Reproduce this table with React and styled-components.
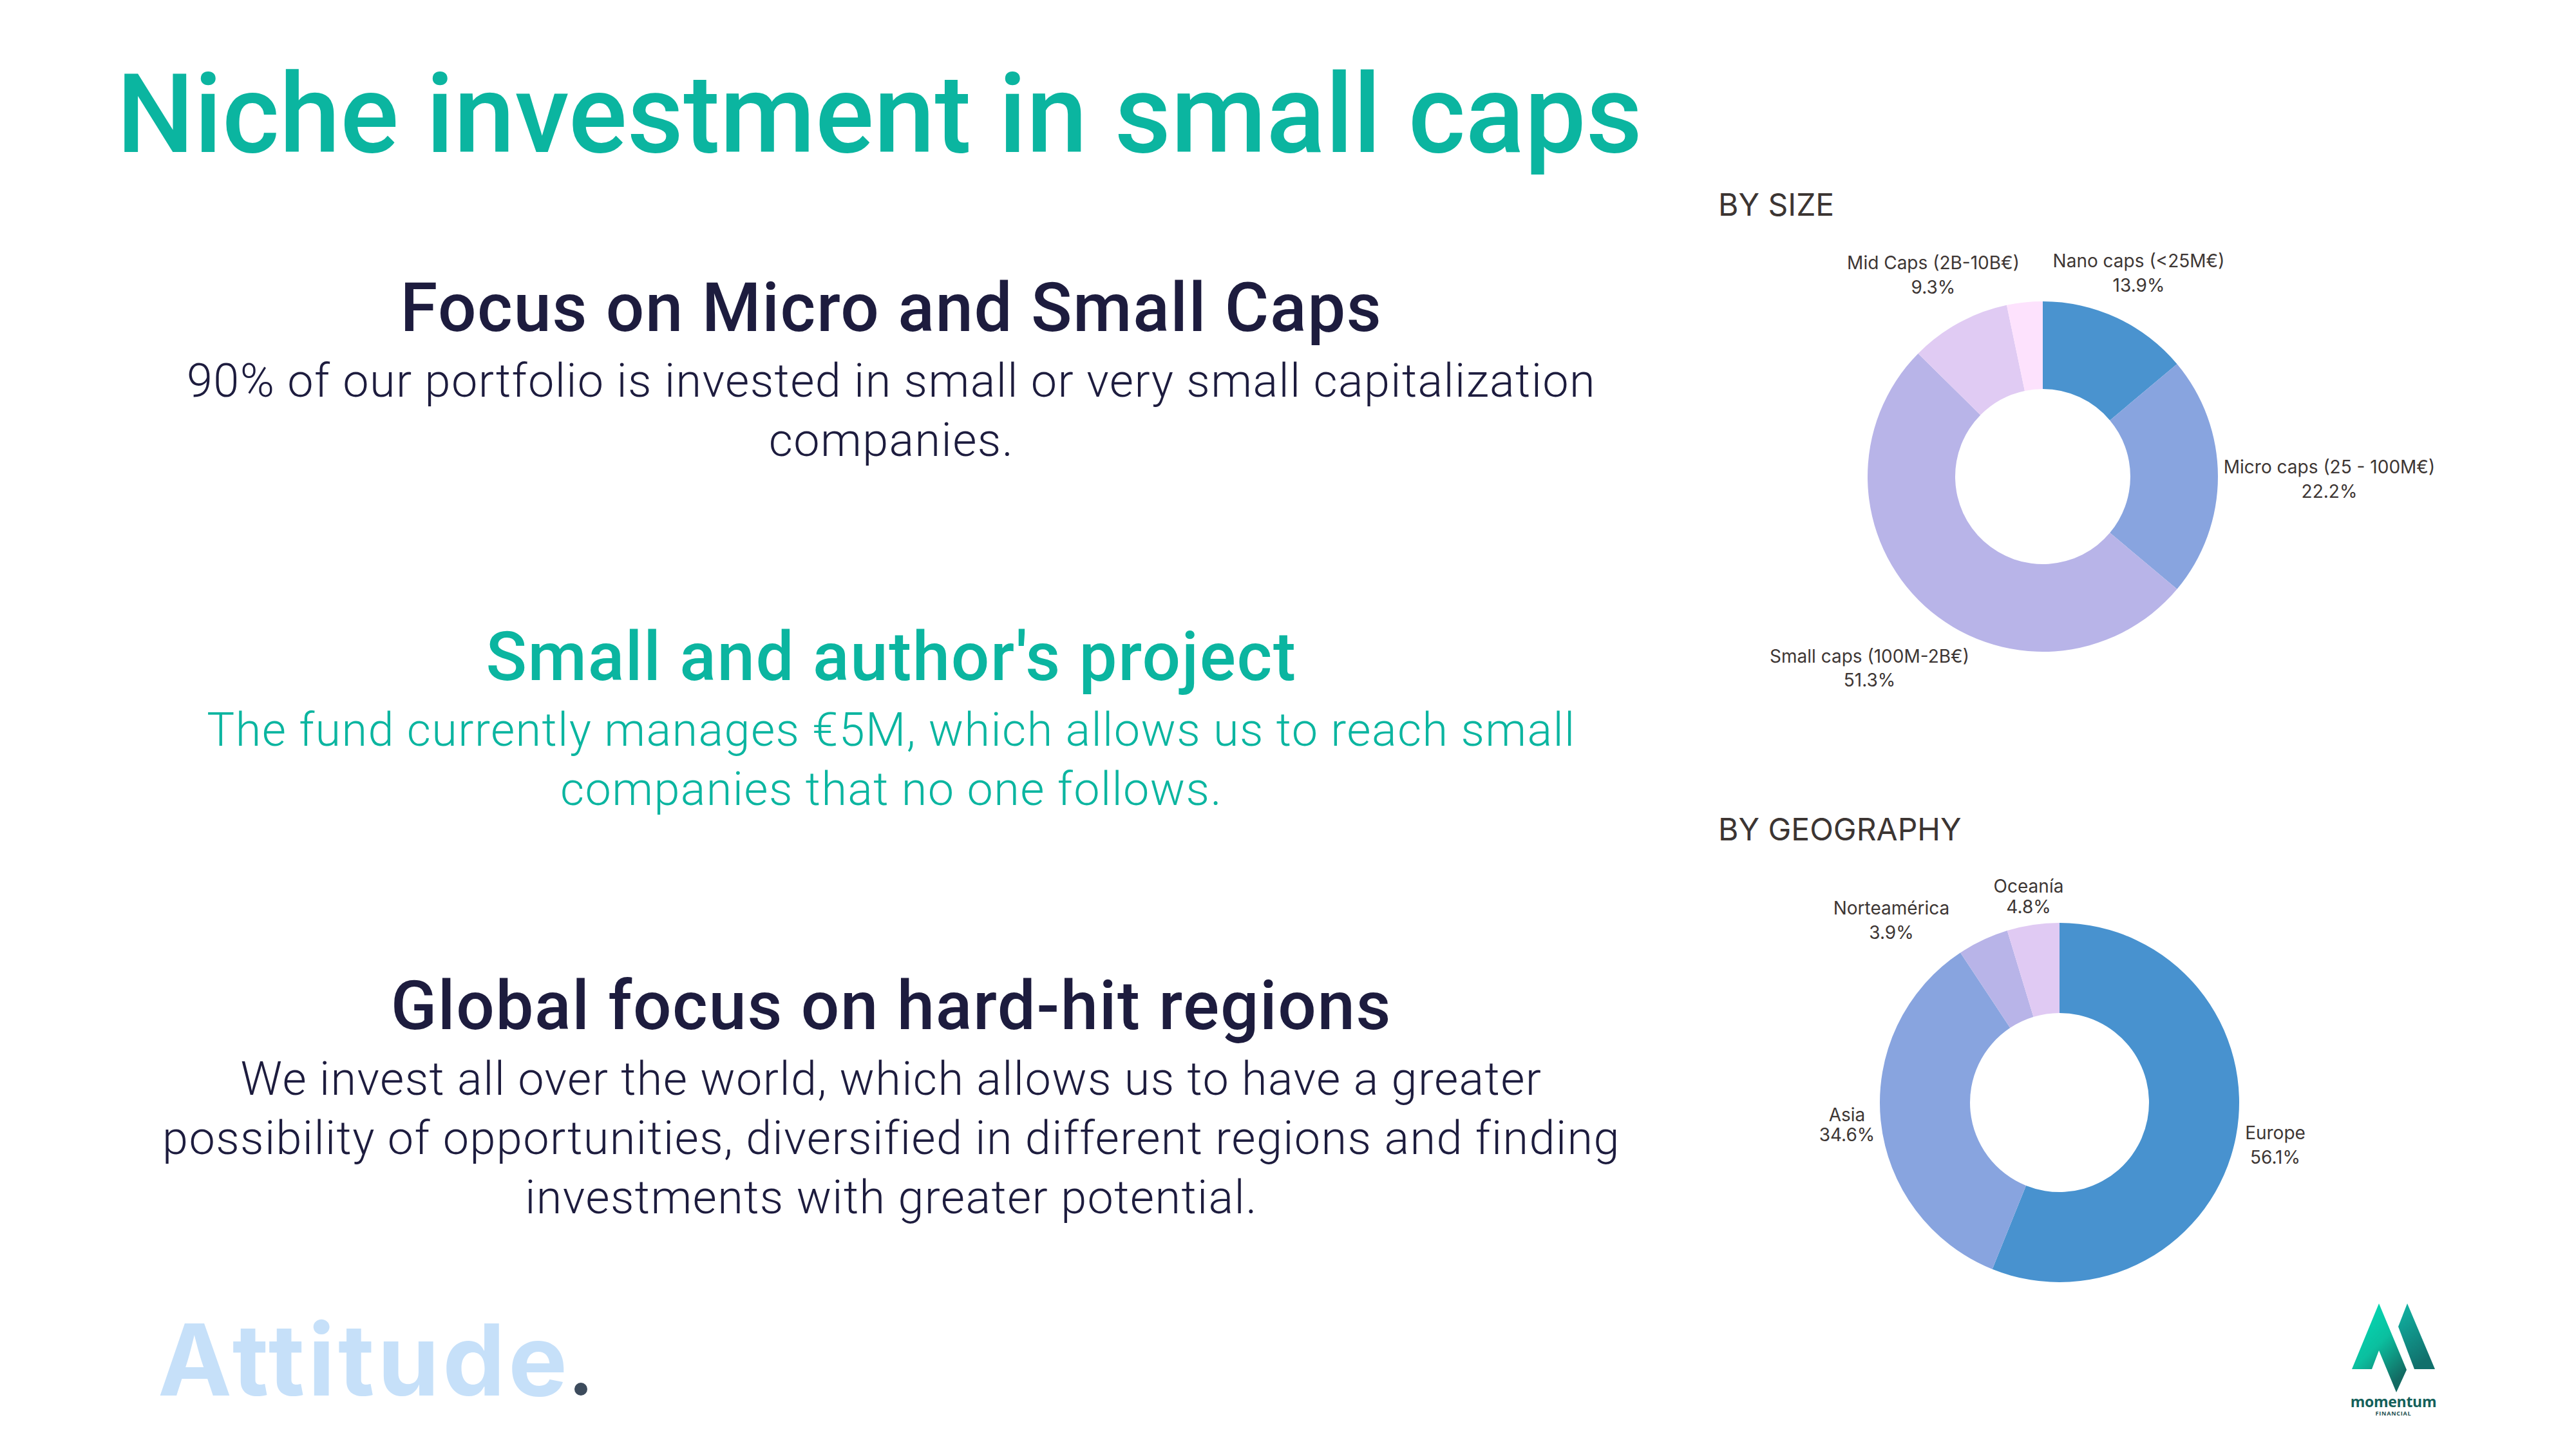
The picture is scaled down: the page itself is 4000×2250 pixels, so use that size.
import React from "react";
import styled, { createGlobalStyle } from "styled-components";

const GlobalStyle = createGlobalStyle`
  html, body { margin: 0; padding: 0; background: #ffffff; }
  body { width: 4000px; height: 2250px; overflow: hidden; }
`;

const NAVY = "#1d1c3e";
const TEAL = "#0bb5a0";

const Slide = styled.div`
  width: 4000px;
  height: 2250px;
  box-sizing: border-box;
  padding-top: 92px;
  display: flex;
  flex-direction: column;
  background: #ffffff;
  font-family: Roboto, "Liberation Sans", sans-serif;
`;

const Title = styled.h1`
  margin: 0;
  padding-left: 181px;
  font-size: 170px;
  line-height: 172px;
  font-weight: 500;
  color: ${TEAL};
  white-space: nowrap;
`;

const Main = styled.div`
  display: grid;
  grid-template-columns: 2668px 1fr;
`;

const Sections = styled.div`
  padding: 149px 0 0 100px;
  display: grid;
  grid-template-rows: 542px 542px auto;
`;

const Section = styled.section`
  display: flex;
  flex-direction: column;
  align-items: center;
  text-align: center;
  color: ${(p) => (p.$accent ? TEAL : NAVY)};
`;

const Heading = styled.h2`
  margin: 0;
  font-size: 105px;
  line-height: 132px;
  font-weight: 500;
  letter-spacing: 1.6px;
  white-space: nowrap;
`;

const Body = styled.p`
  margin: 1px 0 0;
  font-size: 72px;
  line-height: 92px;
  font-weight: 300;
  letter-spacing: 1.4px;
  white-space: nowrap;
`;

const Charts = styled.div`
  padding-top: 25px;
  display: flex;
  flex-direction: column;
`;

const ChartHeading = styled.h3`
  margin: 0;
  font-family: Inter, "Liberation Sans", sans-serif;
  font-weight: 400;
  font-size: 48px;
  line-height: 58px;
  color: #3c3533;
`;

const ChartSvg = styled.svg`
  display: block;
`;

const Label = styled.text`
  font-family: Inter, "Liberation Sans", sans-serif;
  font-size: 28px;
  fill: #3d3634;
`;

const Footer = styled.footer`
  display: flex;
  justify-content: space-between;
  align-items: flex-start;
  padding: 0 219px 0 245px;
`;

const Wordmark = styled.div`
  margin-top: 17px;
  display: flex;
  align-items: baseline;
  font-family: Inter, "Liberation Sans", sans-serif;
  font-weight: 700;
  font-size: 154px;
  line-height: 154px;
  letter-spacing: 5px;
  color: #c6e0f9;
`;

const WordDot = styled.span`
  display: inline-block;
  width: 20px;
  height: 20px;
  margin-left: 6px;
  border-radius: 50%;
  background: #3c4b5c;
`;

const Momentum = styled.div`
  margin-top: 7px;
  width: 129px;
  display: flex;
  flex-direction: column;
  align-items: center;
`;

const MomentumMark = styled.svg`
  display: block;
`;

const MomentumName = styled.div`
  margin-top: 3px;
  font-family: "Open Sans", "Liberation Sans", sans-serif;
  font-weight: 700;
  font-size: 23px;
  line-height: 23px;
  letter-spacing: -0.3px;
  color: #14605a;
`;

const MomentumSub = styled.div`
  margin-top: 2px;
  font-family: "Open Sans", "Liberation Sans", sans-serif;
  font-weight: 700;
  font-size: 9px;
  line-height: 9px;
  letter-spacing: 0.8px;
  color: #1d4f50;
`;

function slicePath(cx, cy, r, ri, a0, a1) {
  const rad = (a) => ((a - 90) * Math.PI) / 180;
  const pt = (rr, a) => [cx + rr * Math.cos(rad(a)), cy + rr * Math.sin(rad(a))];
  const large = a1 - a0 > 180 ? 1 : 0;
  const [x0, y0] = pt(r, a0);
  const [x1, y1] = pt(r, a1);
  const [x2, y2] = pt(ri, a1);
  const [x3, y3] = pt(ri, a0);
  return `M${x0} ${y0} A${r} ${r} 0 ${large} 1 ${x1} ${y1} L${x2} ${y2} A${ri} ${ri} 0 ${large} 0 ${x3} ${y3} Z`;
}

function Donut({ width, height, cx, cy, r, ri, slices, labels }) {
  const total = slices.reduce((s, x) => s + x.value, 0);
  let acc = 0;
  return (
    <ChartSvg width={width} height={height} viewBox={`0 0 ${width} ${height}`}>
      {slices.map((s, i) => {
        const a0 = (acc / total) * 360;
        acc += s.value;
        const a1 = (acc / total) * 360;
        return <path key={i} d={slicePath(cx, cy, r, ri, a0, a1)} fill={s.color} />;
      })}
      {labels.map((l, i) => (
        <g key={i}>
          <Label x={l.x} y={l.y1} textAnchor="middle">{l.name}</Label>
          <Label x={l.x} y={l.y2} textAnchor="middle">{l.value}</Label>
        </g>
      ))}
    </ChartSvg>
  );
}

const sizeSlices = [
  { value: 13.9, color: "#4a93cf" },
  { value: 22.2, color: "#88a4df" },
  { value: 51.3, color: "#b8b4e8" },
  { value: 9.3, color: "#e0cbf3" },
  { value: 3.3, color: "#fde2fd" },
];

const sizeLabels = [
  { name: "Mid Caps (2B-10B€)", value: "9.3%", x: 334, y1: 71, y2: 109 },
  { name: "Nano caps (<25M€)", value: "13.9%", x: 653, y1: 68, y2: 106 },
  { name: "Micro caps (25 - 100M€)", value: "22.2%", x: 949, y1: 388, y2: 426 },
  { name: "Small caps (100M-2B€)", value: "51.3%", x: 235, y1: 682, y2: 719 },
];

const geoSlices = [
  { value: 56.1, color: "#4892cf" },
  { value: 34.6, color: "#88a4df" },
  { value: 4.6, color: "#b8b4e8" },
  { value: 4.7, color: "#e0caf3" },
];

const geoLabels = [
  { name: "Oceanía", value: "4.8%", x: 482, y1: 69, y2: 101 },
  { name: "Norteamérica", value: "3.9%", x: 269, y1: 103, y2: 141 },
  { name: "Asia", value: "34.6%", x: 200, y1: 424, y2: 455 },
  { name: "Europe", value: "56.1%", x: 865, y1: 452, y2: 490 },
];

function MomentumLogo() {
  return (
    <Momentum>
      <MomentumMark width="129" height="138" viewBox="0 0 129 138">
        <defs>
          <linearGradient id="mLeft" x1="0" y1="0" x2="0.6" y2="1">
            <stop offset="0" stopColor="#00e2bb" />
            <stop offset="0.55" stopColor="#0bbf9f" />
            <stop offset="1" stopColor="#136a62" />
          </linearGradient>
          <linearGradient id="mRight" x1="0" y1="0" x2="0.4" y2="1">
            <stop offset="0" stopColor="#10b7a6" />
            <stop offset="1" stopColor="#11706c" />
          </linearGradient>
        </defs>
        <polygon points="42,0 85,103 69,138 42,73 31,102 0,102" fill="url(#mLeft)" />
        <polygon points="86,0 129,102 97,102 72,36" fill="url(#mRight)" />
      </MomentumMark>
      <MomentumName>momentum</MomentumName>
      <MomentumSub>FINANCIAL</MomentumSub>
    </Momentum>
  );
}

export default function App() {
  return (
    <>
      <GlobalStyle />
      <Slide>
        <Title>Niche investment in small caps</Title>
        <Main>
          <Sections>
            <Section>
              <Heading>Focus on Micro and Small Caps</Heading>
              <Body>
                90% of our portfolio is invested in small or very small capitalization
                <br />
                companies.
              </Body>
            </Section>
            <Section $accent>
              <Heading>Small and author's project</Heading>
              <Body>
                The fund currently manages €5M, which allows us to reach small
                <br />
                companies that no one follows.
              </Body>
            </Section>
            <Section>
              <Heading>Global focus on hard-hit regions</Heading>
              <Body>
                We invest all over the world, which allows us to have a greater
                <br />
                possibility of opportunities, diversified in different regions and finding
                <br />
                investments with greater potential.
              </Body>
            </Section>
          </Sections>
          <Charts>
            <ChartHeading>BY SIZE</ChartHeading>
            <Donut
              width={1332}
              height={912}
              cx={504}
              cy={393}
              r={272}
              ri={136}
              slices={sizeSlices}
              labels={sizeLabels}
            />
            <ChartHeading>BY GEOGRAPHY</ChartHeading>
            <Donut
              width={1332}
              height={700}
              cx={530}
              cy={395}
              r={279}
              ri={139}
              slices={geoSlices}
              labels={geoLabels}
            />
          </Charts>
        </Main>
        <Footer>
          <Wordmark>
            Attitude
            <WordDot />
          </Wordmark>
          <MomentumLogo />
        </Footer>
      </Slide>
    </>
  );
}
